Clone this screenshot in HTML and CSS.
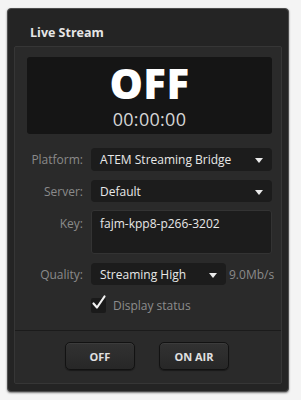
FILE: index.html
```html
<!DOCTYPE html>
<html>
<head>
<meta charset="utf-8">
<link rel="stylesheet" href="styles.css">
</head>
<body>
<div class="panel">
  <div class="title">Live Stream</div>
  <div class="inner">
    <div class="display">
      <div class="state">OFF</div>
      <div class="timer">00:00:00</div>
    </div>
    <div class="form">
      <div class="row r-platform">
        <div class="label">Platform:</div>
        <div class="select wide"><span>ATEM Streaming Bridge</span><i class="arrow"></i></div>
      </div>
      <div class="row r-server">
        <div class="label">Server:</div>
        <div class="select wide"><span>Default</span><i class="arrow"></i></div>
      </div>
      <div class="row r-key top">
        <div class="label">Key:</div>
        <div class="keybox">fajm-kpp8-p266-3202</div>
      </div>
      <div class="row r-quality">
        <div class="label">Quality:</div>
        <div class="select narrow"><span>Streaming High</span><i class="arrow"></i></div>
        <div class="rate">9.0Mb/s</div>
      </div>
      <div class="row r-check">
        <div class="label"></div>
        <div class="check">
          <span class="box"><svg width="18" height="18" viewBox="0 0 18 18"><path d="M3.5 9.5 L7 13.5 L14.5 2.5" fill="none" stroke="#f2f2f2" stroke-width="2.2" stroke-linecap="round" stroke-linejoin="round"/></svg></span>
          <span class="ctext">Display status</span>
        </div>
      </div>
    </div>
    <div class="actions">
      <button class="btn">OFF</button>
      <button class="btn">ON AIR</button>
    </div>
  </div>
</div>
</body>
</html>
```

FILE: styles.css
```css
html, body {
  margin: 0;
  padding: 0;
  background: #f4f4f4;
}
body {
  font-family: "Open Sans", "Liberation Sans", sans-serif;
  width: 301px;
  height: 400px;
  overflow: hidden;
}
.panel {
  margin: 8px 0 0 7px;
  width: 280px;
  height: 382px;
  background: #242424;
  border: 1px solid #4e4e4e;
  border-radius: 4px;
  box-shadow: 0 1px 2px rgba(0,0,0,0.5);
  display: flex;
  flex-direction: column;
}
.title {
  height: 37px;
  display: flex;
  align-items: center;
  padding-left: 22px;
  padding-top: 9px;
  box-sizing: border-box;
  color: #e6e6e6;
  font-size: 12.5px;
  font-weight: 700;
}
.inner {
  margin: 0 6px 0 6px;
  height: 336px;
  background: #2a2a2a;
  border: 1px solid #363636;
  border-radius: 2px;
  display: flex;
  flex-direction: column;
}
.display {
  margin: 10px 9px 0 12px;
  height: 77px;
  background: #151515;
  border-radius: 3px;
  display: flex;
  flex-direction: column;
  align-items: center;
  color: #fff;
}
.state {
  font-size: 42px;
  font-weight: 800;
  line-height: 34px;
  margin-top: 9px;
  letter-spacing: 0.5px;
}
.timer {
  font-size: 18px;
  line-height: 16px;
  color: #d6d6d6;
  margin-top: 11px;
  letter-spacing: 0.3px;
}
.form {
  display: flex;
  flex-direction: column;
  margin-top: 14px;
}
.row {
  display: flex;
  align-items: center;
}
.row.top { align-items: flex-start; }
.label {
  width: 68px;
  flex: none;
  text-align: right;
  color: #8a8a8a;
  font-size: 12px;
  margin-right: 8px;
}
.top .label { margin-top: 5px; }
.select {
  height: 23px;
  background: #1c1c1c;
  border-radius: 4px;
  display: flex;
  align-items: center;
  justify-content: space-between;
  padding: 0 9px 0 9px;
  box-sizing: border-box;
  color: #e8e8e8;
  font-size: 12px;
}
.select.wide { width: 181px; }
.select.narrow { width: 135px; }
.arrow {
  width: 0;
  height: 0;
  border-left: 4px solid transparent;
  border-right: 4px solid transparent;
  border-top: 5px solid #eaeaea;
  margin-top: 2px;
}
.r-server { margin-top: 9px; }
.r-server .select { height: 22px; }
.r-key { margin-top: 8px; }
.keybox {
  width: 181px;
  height: 44px;
  background: #1c1c1c;
  border: 1px solid #333;
  border-radius: 3px;
  box-sizing: border-box;
  padding: 4px 8px;
  color: #e8e8e8;
  font-size: 12px;
}
.r-quality { margin-top: 9px; }
.r-quality .select { height: 22px; }
.rate {
  margin-left: 3px;
  color: #8a8a8a;
  font-size: 12px;
}
.r-check { margin-top: 12px; }
.check {
  display: flex;
  align-items: center;
}
.box {
  width: 15px;
  height: 15px;
  background: #1a1a1a;
  border-radius: 2px;
  position: relative;
}
.box svg {
  position: absolute;
  left: -1px;
  top: -4px;
}
.ctext {
  margin-left: 7px;
  color: #8d8d8d;
  font-size: 12px;
}
.actions {
  margin-top: 16px;
  border-top: 1px solid #1b1b1b;
  flex: 1;
  display: flex;
  justify-content: center;
  gap: 24px;
  padding-top: 11px;
  padding-right: 2px;
}
.btn {
  width: 70px;
  height: 28px;
  background: linear-gradient(#323232, #272727);
  border: 1px solid #121212;
  border-radius: 5px;
  box-shadow: inset 0 1px 0 #3c3c3c, 0 1px 1px rgba(0,0,0,0.4);
  color: #e0e0e0;
  font-family: "Open Sans", "Liberation Sans", sans-serif;
  font-size: 11px;
  font-weight: 700;
  padding: 0;
}
```
